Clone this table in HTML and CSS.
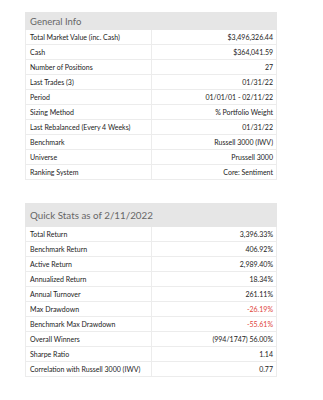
FILE: index.html
```html
<!DOCTYPE html>
<html>
<head>
<meta charset="utf-8">
<link rel="stylesheet" href="styles.css">
</head>
<body>
<div class="page">
  <table class="info">
    <thead><tr><th colspan="2" class="head small">General Info</th></tr></thead>
    <tbody>
      <tr><td>Total Market Value (inc. Cash)</td><td class="v">$3,496,326.44</td></tr>
      <tr><td>Cash</td><td class="v">$364,041.59</td></tr>
      <tr><td>Number of Positions</td><td class="v">27</td></tr>
      <tr><td>Last Trades (3)</td><td class="v">01/31/22</td></tr>
      <tr><td>Period</td><td class="v">01/01/01 - 02/11/22</td></tr>
      <tr><td>Sizing Method</td><td class="v">% Portfolio Weight</td></tr>
      <tr><td>Last Rebalanced (Every 4 Weeks)</td><td class="v">01/31/22</td></tr>
      <tr><td>Benchmark</td><td class="v">Russell 3000 (IWV)</td></tr>
      <tr><td>Universe</td><td class="v">Prussell 3000</td></tr>
      <tr><td>Ranking System</td><td class="v">Core: Sentiment</td></tr>
    </tbody>
  </table>
  <table class="info second">
    <thead><tr><th colspan="2" class="head big">Quick Stats as of 2/11/2022</th></tr></thead>
    <tbody>
      <tr><td>Total Return</td><td class="v">3,396.33%</td></tr>
      <tr><td>Benchmark Return</td><td class="v">406.92%</td></tr>
      <tr><td>Active Return</td><td class="v">2,989.40%</td></tr>
      <tr><td>Annualized Return</td><td class="v">18.34%</td></tr>
      <tr><td>Annual Turnover</td><td class="v">261.11%</td></tr>
      <tr><td>Max Drawdown</td><td class="v neg">-26.19%</td></tr>
      <tr><td>Benchmark Max Drawdown</td><td class="v neg">-55.61%</td></tr>
      <tr><td>Overall Winners</td><td class="v">(994/1747) 56.00%</td></tr>
      <tr><td>Sharpe Ratio</td><td class="v">1.14</td></tr>
      <tr><td>Correlation with Russell 3000 (IWV)</td><td class="v">0.77</td></tr>
    </tbody>
  </table>
</div>
</body>
</html>
```
FILE: styles.css
```css
html, body { margin: 0; padding: 0; background: #fff; }
.page {
  padding: 12px 0 0 25px;
  font-family: Lato, "Open Sans", sans-serif;
}
.info {
  width: 252px;
  border-collapse: collapse;
  table-layout: fixed;
}
.second { margin-top: 23px; }
.head {
  background: #e6e6e6;
  color: #666;
  font-weight: normal;
  text-align: left;
  padding: 0 0 0 4px;
  border: 1px solid #e6e6e6;
}
.head.small { height: 16px; font-size: 9.5px; }
.head.big { height: 22px; font-size: 9.8px; }
.info td {
  height: 14px;
  padding: 0 3px 0 4px;
  font-size: 7px;
  color: #222;
  border: 1px solid #ececec;
  white-space: nowrap;
}
.info td:first-child { width: 134px; }
.info td.v { text-align: right; }
.info td.neg { color: #e0443a; }
```
